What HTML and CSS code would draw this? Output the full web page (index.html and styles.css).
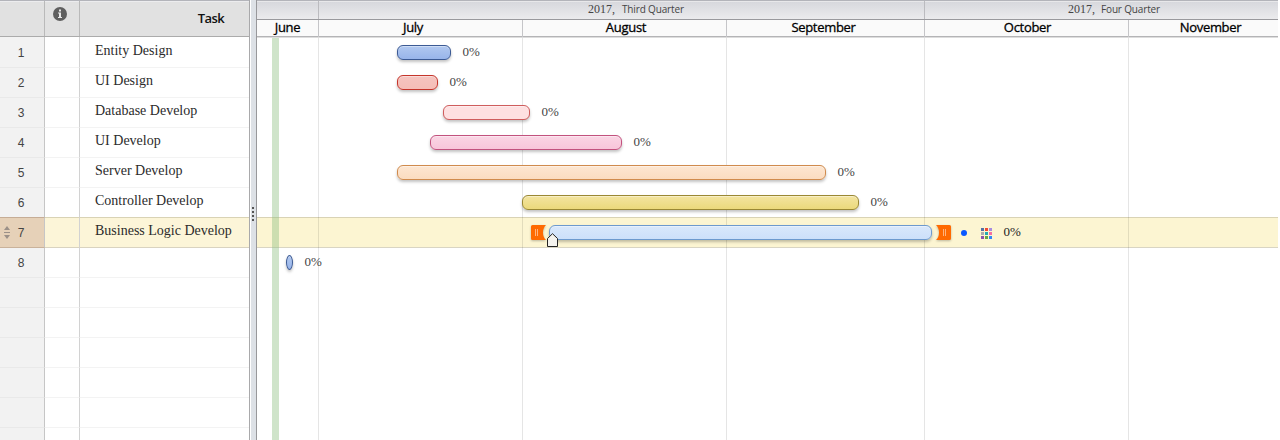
FILE: index.html
```html
<!DOCTYPE html>
<html lang="en">
<head>
<meta charset="utf-8">
<title>Gantt</title>
<link rel="stylesheet" href="styles.css">
</head>
<body>
<div class="app">
  <div class="table">
    <div class="thead">
      <div class="num"></div>
      <div class="info"><svg width="14" height="14" viewBox="0 0 14 14"><circle cx="7" cy="7" r="7" fill="#5f5f5f"/><path d="M6 2.5h2v2H6zM5 5.5h3v4.5h1v1H5v-1h1V6.500H5z" fill="#e8e8e8"/></svg></div>
      <div class="task">Task</div>
    </div>
    <div class="row top"><div class="num">1</div><div class="info"></div><div class="task"><span>Entity Design</span></div></div>
    <div class="row"><div class="num">2</div><div class="info"></div><div class="task"><span>UI Design</span></div></div>
    <div class="row"><div class="num">3</div><div class="info"></div><div class="task"><span>Database Develop</span></div></div>
    <div class="row"><div class="num">4</div><div class="info"></div><div class="task"><span>UI Develop</span></div></div>
    <div class="row"><div class="num">5</div><div class="info"></div><div class="task"><span>Server Develop</span></div></div>
    <div class="row before"><div class="num">6</div><div class="info"></div><div class="task"><span>Controller Develop</span></div></div>
    <div class="row selected"><div class="num"><svg class="sort" width="6" height="13" viewBox="0 0 6 13"><path d="M3 0l3 4H0zM0 6h6v1H0zM0 9h6l-3 4z" fill="#9b9088"/></svg>7</div><div class="info"></div><div class="task"><span>Business Logic Develop</span></div></div>
    <div class="row"><div class="num">8</div><div class="info"></div><div class="task"></div></div>
    <div class="row"><div class="num"></div><div class="info"></div><div class="task"></div></div>
    <div class="row"><div class="num"></div><div class="info"></div><div class="task"></div></div>
    <div class="row"><div class="num"></div><div class="info"></div><div class="task"></div></div>
    <div class="row"><div class="num"></div><div class="info"></div><div class="task"></div></div>
    <div class="row"><div class="num"></div><div class="info"></div><div class="task"></div></div>
    <div class="row"><div class="num"></div><div class="info"></div><div class="task"></div></div>
  </div>
  <div class="splitter"><i></i><i></i><i></i><i></i></div>
  <div class="chart">
    <div class="quarters">
      <div class="q first"></div>
      <div class="q third"><span class="year">2017,</span><span>Third Quarter</span></div>
      <div class="q fourth"><span class="year">2017,</span><span>Four Quarter</span></div>
    </div>
    <div class="months">
      <div class="m june"><span>June</span></div>
      <div class="m july"><span>July</span></div>
      <div class="m august"><span>August</span></div>
      <div class="m september"><span>September</span></div>
      <div class="m october"><span>October</span></div>
      <div class="m november"><span>November</span></div>
    </div>
    <div class="body">
      <div class="bars">
        <div class="line"></div><div class="line"></div><div class="line"></div><div class="line"></div><div class="line"></div><div class="line edge"></div><div class="line hot"></div>
      </div>
      <div class="grid"><div class="june"></div><div class="july"></div><div class="august"></div><div class="september"></div><div class="october"></div></div>
      <div class="today"></div>
      <div class="bars">
        <div class="line"><div class="bar blue" style="margin-left:140px;width:54px"></div><span class="pct">0%</span></div>
        <div class="line"><div class="bar red" style="margin-left:140px;width:41px"></div><span class="pct">0%</span></div>
        <div class="line"><div class="bar rose" style="margin-left:186px;width:87px"></div><span class="pct">0%</span></div>
        <div class="line"><div class="bar pink" style="margin-left:173px;width:192px"></div><span class="pct">0%</span></div>
        <div class="line"><div class="bar orange" style="margin-left:140px;width:429px"></div><span class="pct">0%</span></div>
        <div class="line"><div class="bar yellow" style="margin-left:265px;width:337px"></div><span class="pct">0%</span></div>
        <div class="line">
          <svg class="handle left" width="15" height="15" viewBox="0 0 15 15"><path d="M1.500 0H15Q12 3 12 7.500Q12 12 15 15H1.500Q0 15 0 13.500V1.500Q0 0 1.500 0z" fill="#ff6a00"/><path d="M4.500 4v7M6.500 4v7" stroke="#ffb37c"/></svg>
          <div class="bar sky" style="width:383px"><svg class="marker" width="11" height="14" viewBox="0 0 11 14"><path d="M.5 13.500V5.500L5.500 .7 10.500 5.500V13.500z" fill="#f4f3ee" stroke="#222"/></svg></div>
          <svg class="handle right" width="15" height="15" viewBox="0 0 15 15"><path d="M13.500 0H0Q3 3 3 7.500Q3 12 0 15H13.500Q15 15 15 13.500V1.500Q15 0 13.500 0z" fill="#ff6a00"/><path d="M7.500 4v7M9.500 4v7" stroke="#ffb37c"/></svg>
          <div class="dot"></div>
          <svg class="palette" width="11" height="11" viewBox="0 0 11 11"><path d="M0 0h3v3H0z" fill="#5470a5"/><path d="M4 0h3v3H4z" fill="#f04a32"/><path d="M8 0h3v3H8z" fill="#a58be0"/><path d="M0 4h3v3H0z" fill="#adadad"/><path d="M4 4h3v3H4z" fill="#24a9b3"/><path d="M8 4h3v3H8z" fill="#f66fa0"/><path d="M0 8h3v3H0z" fill="#8b53ad"/><path d="M4 8h3v3H4z" fill="#67a843"/><path d="M8 8h3v3H8z" fill="#3286f5"/></svg>
          <span class="pct dark">0%</span>
        </div>
        <div class="line"><div class="bar blue tiny" style="margin-left:29px;width:7px"></div><span class="pct">0%</span></div>
      </div>
    </div>
  </div>
</div>
</body>
</html>
```
FILE: styles.css
```css
* { box-sizing: border-box; }
body { margin: 0; background: #fff; }
svg { display: block; flex: none; }
.app { display: flex; width: 1278px; height: 440px; overflow: hidden; }

.table { width: 250px; flex: none; border-right: 1px solid #a9a9ab; }
.thead { display: flex; height: 37px; background: #e1e1e1; border-top: 1px solid #b3b4ba; border-bottom: 1px solid #ababab; box-shadow: inset 0 1px #ececee; }
.num { width: 45px; flex: none; border-right: 1px solid #c6c6c6; }
.info { width: 35px; flex: none; border-right: 1px solid #d2d2d2; }
.task { flex: 1; }
.thead .num, .thead .info { border-color: #b9b9b9; }
.thead .info { padding: 6px 0 0 8px; }
.thead .task { padding: 8px 25px 0 0; text-align: right; font: 600 13px/18px "Open Sans", sans-serif; letter-spacing: -0.6px; color: #111; }
.row { display: flex; height: 30px; }
.row > div { border-bottom: 1px solid #f3f3f3; }
.row .num { position: relative; padding-right: 2px; background: #f2f2f2; border-bottom-color: #e9e9e9; text-align: center; font: 12px/30px "Liberation Sans", Arial, sans-serif; color: #444; }
.row .task { padding: 4px 0 0 15px; font: 14px/18px "Liberation Serif", serif; color: #2b2b2b; white-space: nowrap; }
.top { height: 31px; }
.top .num { padding-top: 1px; }
.top .task { padding-top: 5px; }
.before > div { border-bottom-color: #d9d3b5; }
.before .num { border-bottom-color: #c6ad96; }
.selected > div { background: #fcf5d8; border-bottom-color: #d9d3c0; }
.selected .num { background: #e6d1b8; border-bottom-color: #c9b29b; }
.sort { position: absolute; left: 4px; top: 8px; }

.splitter { width: 7px; flex: none; padding: 207px 0 0 1px; background: #dde1e6; border-left: 1px solid #fff; border-right: 1px solid #98989b; }
.splitter i { display: block; width: 2px; height: 2px; margin-bottom: 2px; background: #555; }

.chart { flex: 1; min-width: 0; display: flex; flex-direction: column; }
.quarters { display: flex; height: 20px; background: linear-gradient(#d6d7dc, #ebebed); border-top: 1px solid #b3b4ba; border-bottom: 1px solid #99999d; box-shadow: inset 0 1px #e8e8ea; }
.q { flex: none; border-right: 1px solid #bbbbbf; font: 10px/17px "Open Sans", sans-serif; letter-spacing: -0.15px; color: #444; white-space: nowrap; }
.first { width: 62px; }
.third { width: 606px; padding-left: 269px; }
.fourth { width: 354px; padding-left: 143px; border: 0; }
.year { display: inline-block; width: 34px; font: 12px/17px "Liberation Serif", serif; letter-spacing: 0; }
.fourth .year { width: 33px; }
.months { display: flex; height: 18px; background: #fafafa; border-bottom: 1px solid #ddd; box-shadow: inset 0 -1px #b4b4b6; }
.m { flex: none; border-right: 1px solid #c5c5c8; text-align: center; font: 13px/15px "Open Sans", sans-serif; letter-spacing: -0.3px; color: #000; -webkit-text-stroke: 0.3px #000; }
.june { width: 62px; }
.july { width: 204px; }
.august { width: 204px; }
.september { width: 198px; }
.october { width: 204px; }
.november { width: 150px; padding-left: 13px; border: 0; }
.m.july { padding-right: 15px; }
.m.august { padding-left: 3px; }
.m.september { padding-right: 4px; }
.m.october { padding-left: 2px; }

.body { flex: 1; display: grid; }
.body > div { grid-area: 1 / 1; }
.grid { display: flex; }
.grid div { border-right: 1px solid rgba(0, 0, 0, .1); }
.today { width: 7px; margin-left: 15px; background: rgba(144, 192, 132, .43); }
.line { display: flex; align-items: flex-start; height: 30px; padding-top: 7px; }
.edge { border-bottom: 1px solid #d9d3b5; }
.hot { background: #fcf5d2; border-bottom: 1px solid #d9d5c3; }
.bar { flex: none; position: relative; height: 15px; border: 1px solid; border-radius: 6px; box-shadow: 0 2px 3px rgba(0, 0, 0, .24), inset 0 1px rgba(255, 255, 255, .4); }
.blue { background: linear-gradient(#b1c8f0, #98b5ea); border-color: #3c5a94; }
.red { background: linear-gradient(#f5c4bf, #f5bdb7); border-color: #c5352b; }
.rose { background: #fee0e1; border-color: #cf5d5d; }
.pink { background: linear-gradient(#fad5e4, #f8c5da); border-color: #c2527e; }
.orange { background: linear-gradient(#fde6d1, #fbdcc0); border-color: #d08b4d; }
.yellow { background: linear-gradient(#f3e4a0, #ebd97b); border-color: #9a8834; }
.sky { background: linear-gradient(#d9e8fb, #cce0fa); border-color: #6d9ace; }
.tiny { border-radius: 50%; }
.pct { margin-left: 11.5px; font: 13px/14px "Liberation Serif", serif; color: #444; }
.handle { filter: drop-shadow(0 1px 1px rgba(0, 0, 0, .25)); }
.left { margin: 0 3px 0 274px; }
.right { margin-left: 4px; }
.marker { position: absolute; left: -3px; top: 7px; }
.dot { width: 6px; height: 6px; margin: 5px 0 0 10px; border-radius: 50%; background: #0a58ff; }
.palette { margin: 3px 0 0 14px; }
.dark { color: #222; }
```
